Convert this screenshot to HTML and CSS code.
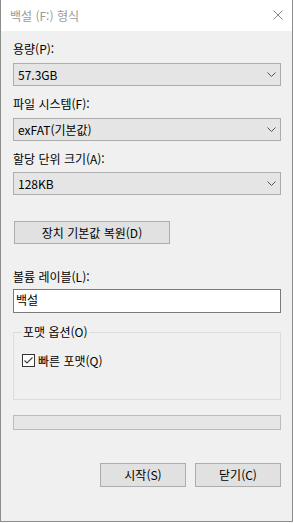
FILE: index.html
```html
<!DOCTYPE html>
<html lang="ko">
<head>
    <meta charset="UTF-8">
    <title>백설 (F:) 형식</title>
    <link rel="stylesheet" href="styles.css">
</head>
<body>
    <div class="window">
        <div class="titlebar">
            <span class="title">백설 (F:) 형식</span>
            <svg class="close" width="10" height="10" viewBox="0 0 10 10">
                <path d="M0.5 0.5 L9.5 9.5 M9.5 0.5 L0.5 9.5" stroke="#8a8a8a" stroke-width="1" fill="none"/>
            </svg>
        </div>

        <div class="content">
            <label class="label first">용량(P):</label>
            <div class="combo">
                <span>57.3GB</span>
                <svg class="chevron" width="9" height="5" viewBox="0 0 9 5">
                    <path d="M0.5 0.5 L4.5 4.5 L8.5 0.5" stroke="#555" stroke-width="1" fill="none"/>
                </svg>
            </div>

            <label class="label">파일 시스템(F):</label>
            <div class="combo">
                <span>exFAT(기본값)</span>
                <svg class="chevron" width="9" height="5" viewBox="0 0 9 5">
                    <path d="M0.5 0.5 L4.5 4.5 L8.5 0.5" stroke="#555" stroke-width="1" fill="none"/>
                </svg>
            </div>

            <label class="label tight">할당 단위 크기(A):</label>
            <div class="combo">
                <span>128KB</span>
                <svg class="chevron" width="9" height="5" viewBox="0 0 9 5">
                    <path d="M0.5 0.5 L4.5 4.5 L8.5 0.5" stroke="#555" stroke-width="1" fill="none"/>
                </svg>
            </div>

            <button class="btn btn-restore">장치 기본값 복원(D)</button>

            <label class="label volume">볼륨 레이블(L):</label>
            <div class="textbox">백설</div>

            <fieldset class="group">
                <legend>포맷 옵션(O)</legend>
                <div class="check-row">
                    <svg class="checkbox" width="13" height="13" viewBox="0 0 13 13">
                        <rect x="0.5" y="0.5" width="12" height="12" fill="#fff" stroke="#333"/>
                        <path d="M2.5 6.5 L5 9 L10.5 3.5" stroke="#444" stroke-width="1.2" fill="none"/>
                    </svg>
                    <span>빠른 포맷(Q)</span>
                </div>
            </fieldset>

            <div class="progress"></div>

            <div class="actions">
                <button class="btn btn-action">시작(S)</button>
                <button class="btn btn-action">닫기(C)</button>
            </div>
        </div>
    </div>
</body>
</html>
```

FILE: styles.css
```css
* {
    margin: 0;
    padding: 0;
    box-sizing: border-box;
}

body {
    font-family: "Noto Sans CJK KR", "Noto Sans", sans-serif;
    font-size: 12px;
    color: #000;
    background: #fff;
}

.window {
    width: 293px;
    height: 522px;
    background: #f0f0f0;
    border: 1px solid #8c8c8c;
    border-top: none;
}

.titlebar {
    height: 31px;
    background: #fff;
    display: flex;
    align-items: center;
    justify-content: space-between;
    padding: 0 9px 0 9px;
}

.title {
    color: #9a9a9a;
    line-height: 16px;
}

.close {
    display: block;
    margin-top: -1px;
}

.content {
    display: flex;
    flex-direction: column;
    padding: 10px 11px 0 12px;
}

.label {
    display: block;
    line-height: 16px;
    height: 16px;
    margin-top: 10px;
    margin-bottom: 6px;
}

.label.first {
    margin-top: 0;
}

.label.tight {
    margin-bottom: 5px;
}

.combo {
    width: 268px;
    height: 23px;
    background: #e5e5e5;
    border: 1px solid #adadad;
    display: flex;
    align-items: center;
    justify-content: space-between;
    padding: 0 4px 0 4px;
    line-height: 16px;
}

.chevron {
    display: block;
}

.btn {
    font-family: inherit;
    font-size: 12px;
    line-height: 16px;
    color: #000;
    background: #e1e1e1;
    border: 1px solid #adadad;
    height: 23px;
}

.btn-restore {
    width: 156px;
    margin-top: 26px;
    margin-left: 1px;
}

.label.volume {
    margin-top: 25px;
    margin-bottom: 4px;
}

.textbox {
    width: 268px;
    height: 24px;
    background: #fff;
    border: 1px solid #7a7a7a;
    padding: 0 2px;
    line-height: 20px;
}

.group {
    width: 268px;
    margin-top: 11px;
    border: 1px solid #dcdcdc;
    padding: 12px 7px 31px 8px;
}

.group legend {
    padding: 0 1px;
    line-height: 16px;
}

.check-row {
    display: flex;
    align-items: center;
    gap: 3px;
    height: 16px;
}

.checkbox {
    display: block;
}

.progress {
    width: 268px;
    height: 15px;
    margin-top: 15px;
    background: #e6e6e6;
    border: 1px solid #bcbcbc;
}

.actions {
    display: flex;
    justify-content: flex-end;
    gap: 9px;
    margin-top: 33px;
    width: 268px;
}

.btn-action {
    width: 86px;
    height: 24px;
}
```
